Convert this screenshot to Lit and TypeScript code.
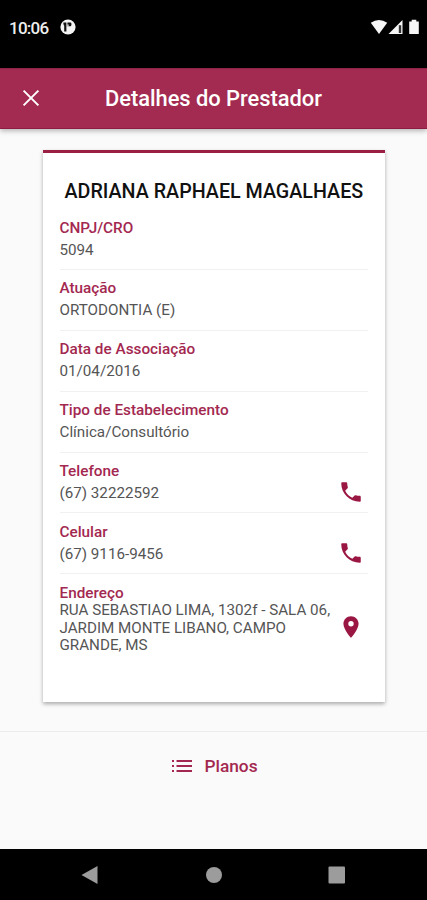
import { LitElement, html, css, svg, nothing } from "lit";
import { customElement } from "lit/decorators.js";

interface Field {
  label: string;
  value: string;
  icon?: "phone";
}

const fields: Field[] = [
  { label: "CNPJ/CRO", value: "5094" },
  { label: "Atuação", value: "ORTODONTIA (E)" },
  { label: "Data de Associação", value: "01/04/2016" },
  { label: "Tipo de Estabelecimento", value: "Clínica/Consultório" },
  { label: "Telefone", value: "(67) 32222592", icon: "phone" },
  { label: "Celular", value: "(67) 9116-9456", icon: "phone" },
];

const phone = svg`<path d="M6.62 10.79c1.44 2.83 3.76 5.14 6.59 6.59l2.2-2.2c.27-.27.67-.36 1.02-.24 1.12.37 2.33.57 3.57.57.55 0 1 .45 1 1V20c0 .55-.45 1-1 1-9.39 0-17-7.61-17-17 0-.55.45-1 1-1h3.5c.55 0 1 .45 1 1 0 1.25.2 2.45.57 3.57.11.35.03.74-.25 1.02l-2.2 2.2z"/>`;
const place = svg`<path d="M12 2C8.13 2 5 5.13 5 9c0 5.25 7 13 7 13s7-7.75 7-13c0-3.87-3.13-7-7-7zm0 9.5a2.5 2.5 0 0 1 0-5 2.5 2.5 0 0 1 0 5z"/>`;

@customElement("app-root")
export class AppRoot extends LitElement {
  static styles = css`
    :host {
      display: flex;
      flex-direction: column;
      height: 900px;
      overflow: hidden;
      background: #fafafa;
      font-family: Roboto, "Liberation Sans", sans-serif;
      color: #555;
    }
    svg { display: block; flex: none; }
    .status {
      height: 67.5px;
      flex: none;
      box-sizing: border-box;
      padding: 17px 7px 0 9px;
      background: #000;
      color: #eee;
      display: flex;
      align-items: flex-start;
    }
    .time {
      font-size: 17px;
      line-height: 22px;
      font-weight: 500;
      width: 51px;
      letter-spacing: -0.75px;
      white-space: nowrap;
    }
    .badge { margin-top: 2px; }
    .signals { margin-left: auto; }
    .bar {
      height: 61px;
      flex: none;
      box-sizing: border-box;
      background: #a32a50;
      border-top: 1px solid #8f2346;
      border-bottom: 1px solid #8c1d40;
      box-shadow: 0 2px 5px rgba(0, 0, 0, 0.28);
      display: flex;
      align-items: center;
      color: #fff;
      padding: 0 0 0 19px;
    }
    .title {
      font-size: 21.9px;
      font-weight: 500;
      line-height: 28px;
      margin: 2px 0 0 62px;
      letter-spacing: -0.03px;
      white-space: nowrap;
    }
    .card {
      margin: 21px 42px 0 42.5px;
      height: 552px;
      flex: none;
      box-sizing: border-box;
      background: #fff;
      border-top: 3px solid #9a1f42;
      box-shadow: 0 2px 4px rgba(0, 0, 0, 0.32);
      padding: 26px 17px 0;
    }
    .name {
      font-size: 19.7px;
      line-height: 26px;
      font-weight: 500;
      color: #111;
      padding-left: 5px;
      margin-bottom: 4.8px;
      white-space: nowrap;
    }
    .row {
      height: 60.83px;
      box-sizing: border-box;
      border-bottom: 1px solid #f1f1f1;
      padding-top: 7.3px;
      display: flex;
      justify-content: space-between;
    }
    .label {
      font-size: 15.3px;
      line-height: 22px;
      font-weight: 500;
      color: #a32850;
      white-space: nowrap;
    }
    .value {
      font-size: 15.2px;
      line-height: 22px;
      white-space: nowrap;
    }
    .row svg { margin: 19px 4.5px 0 0; }
    .row svg, .address svg { fill: #9b1743; }
    .address {
      padding-top: 7.5px;
      display: flex;
      justify-content: space-between;
    }
    .address .value { line-height: 17.5px; margin-top: -1.5px; }
    .address svg { margin: 32px 4.5px 0 0; }
    .plans {
      margin-top: 29.2px;
      border-top: 1px solid #ececec;
      height: 68px;
      flex: none;
      display: flex;
      align-items: center;
      justify-content: center;
      gap: 12px;
      padding-left: 3px;
      color: #a32850;
      font-size: 17.3px;
      font-weight: 500;
    }
    .nav {
      margin-top: auto;
      height: 51.5px;
      flex: none;
      background: #000;
    }
  `;

  render() {
    return html`
      <div class="status">
        <span class="time">10:06</span>
        <svg class="badge" width="16" height="16" viewBox="0 0 16 16">
          <circle cx="8" cy="8" r="7.6" fill="#f4f4f4" />
          <path d="M3.4 3.6h3v8.800H4.200V6.800C3.500 6 3.300 5 3.400 3.600zM7.400 3.600h3.200c1.200 0 1.200 3.600 0 3.600H7.400z" fill="#111" />
          <path d="M7.400 5.600h1.200v1.600H7.400z" fill="#f4f4f4" />
        </svg>
        <svg class="signals" width="50" height="18" viewBox="0 0 50 18" fill="#f6f6f6">
          <path d="M.8 5.800Q9 .2 17.200 5.800L9 17z" />
          <path d="M32.500 3v14H18.500z" />
          <path d="M28.800 8.200h2.400V16h-2.400z" fill="#333" />
          <path d="M39.200 4.400h2.500V2.800h4.600v1.600h2.500V17h-9.600z" />
        </svg>
      </div>
      <div class="bar">
        <svg width="24" height="24" viewBox="0 0 24 24" fill="none" stroke="#fff" stroke-width="2">
          <path d="M4.600 4.600l14.800 14.800M19.400 4.600L4.600 19.400" />
        </svg>
        <span class="title">Detalhes do Prestador</span>
      </div>
      <div class="card">
        <div class="name">ADRIANA RAPHAEL MAGALHAES</div>
        ${fields.map(
          (f) => html`<div class="row">
            <div>
              <div class="label">${f.label}</div>
              <div class="value">${f.value}</div>
            </div>
            ${f.icon ? html`<svg width="26" height="26" viewBox="0 0 24 24">${phone}</svg>` : nothing}
          </div>`
        )}
        <div class="address">
          <div>
            <div class="label">Endereço</div>
            <div class="value">RUA SEBASTIAO LIMA, 1302f - SALA 06,<br />JARDIM MONTE LIBANO, CAMPO<br />GRANDE, MS</div>
          </div>
          <svg width="26" height="26" viewBox="0 0 24 24">${place}</svg>
        </div>
      </div>
      <div class="plans">
        <svg width="20" height="14" viewBox="0 0 20 14" fill="#a32850">
          <path d="M0 1h2v2H0zM0 6h2v2H0zM0 11h2v2H0zM4.500 1H20v2H4.500zM4.500 6H20v2H4.500zM4.500 11H20v2H4.500z" />
        </svg>
        <span>Planos</span>
      </div>
      <div class="nav">
        <svg width="427" height="51" viewBox="0 0 427 51" fill="#9c9c9c">
          <path d="M81.500 26L97.500 17v18z" />
          <circle cx="214" cy="26" r="8" />
          <rect x="328.500" y="17.500" width="16.500" height="17" rx="1" />
        </svg>
      </div>
    `;
  }
}
